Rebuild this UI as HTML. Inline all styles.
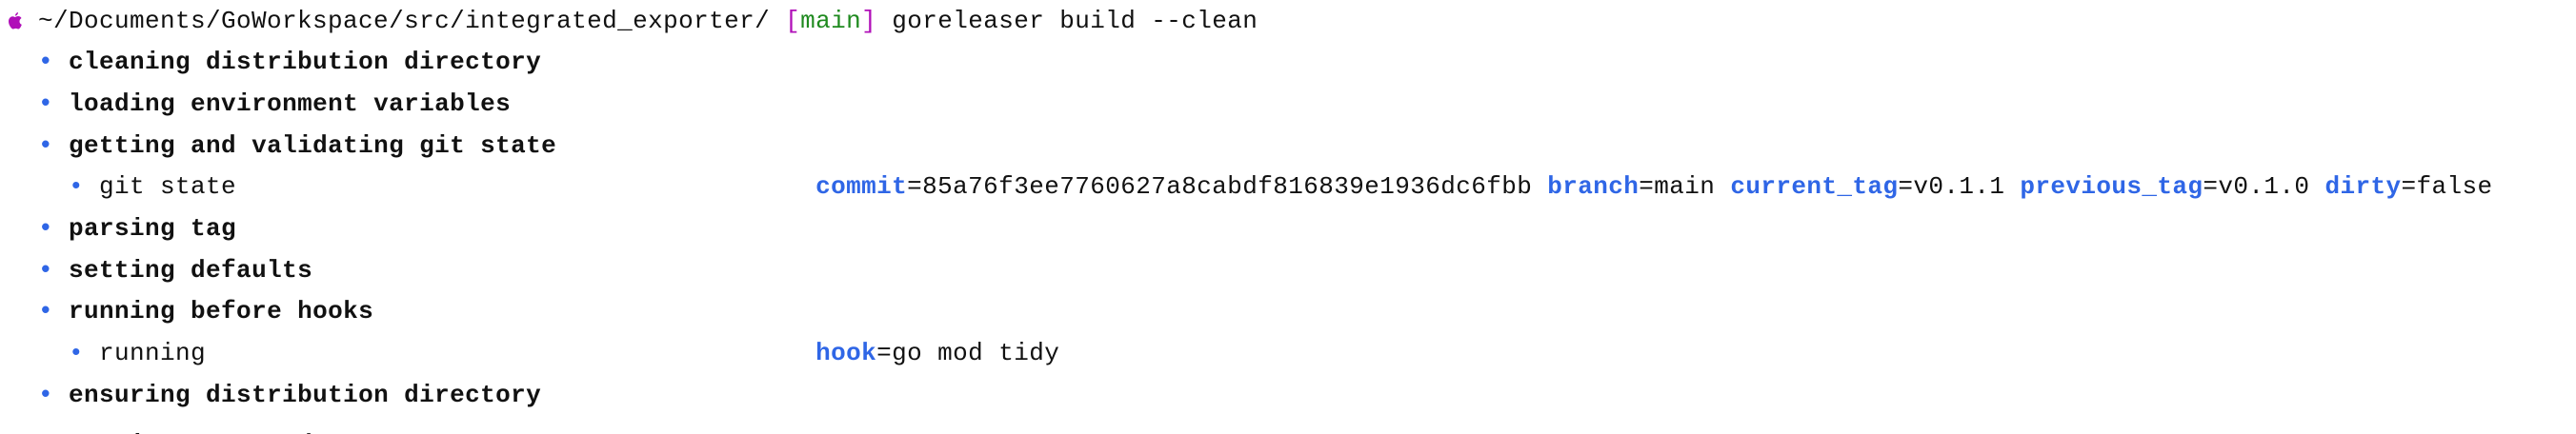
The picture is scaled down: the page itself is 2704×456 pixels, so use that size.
<!DOCTYPE html>
<html><head><meta charset="utf-8"><style>
html,body{margin:0;padding:0;background:#fff;width:2704px;height:456px;overflow:hidden;position:relative}
.t{position:absolute;left:8px;white-space:pre;font-family:"Liberation Mono",monospace;font-size:26px;line-height:43.7px;height:43.7px;color:#111;letter-spacing:0.4px}
.b{font-weight:bold}
.k{color:#2f66e6;font-weight:bold}
.bl{color:#2f66e6}
.m{color:#b00fb8}
.g{color:#1f8a1f}
.clip{position:absolute;left:0;top:446px;width:2704px;height:10px;overflow:hidden}
</style></head><body>
<svg style="position:absolute;left:8px;top:12px" width="16" height="20" viewBox="0 0 16 20"><path d="M11 1c0 2-1.5 3.5-3 3.6C8 2.8 9.4 1.2 11 1z M8 6c1-.6 2-1 3-1 1.6 0 2.8.8 3.5 2-1.6 1-2 2.4-2 3.6 0 1.6 1 2.8 2.3 3.3-.6 1.9-2 4.6-3.6 4.6-1 0-1.4-.6-2.6-.6-1.3 0-1.8.6-2.8.6C4.2 18.5 1 14.5 1 10.5 1 7.4 3 5.2 5.3 5.2c1.2 0 2 .8 2.7.8z" fill="#b00fb8"/></svg>
<div class="t" style="top:0.5px">  ~/Documents/GoWorkspace/src/integrated_exporter/ <span class="m">[</span><span class="g">main</span><span class="m">]</span> goreleaser build --clean</div>
<div class="t b" style="top:44.2px">  <span class="bl">•</span> cleaning distribution directory</div>
<div class="t b" style="top:87.9px">  <span class="bl">•</span> loading environment variables</div>
<div class="t b" style="top:131.6px">  <span class="bl">•</span> getting and validating git state</div>
<div class="t" style="top:175.3px">    <span class="bl">•</span> git state                                      <span class="k">commit</span>=85a76f3ee7760627a8cabdf816839e1936dc6fbb <span class="k">branch</span>=main <span class="k">current_tag</span>=v0.1.1 <span class="k">previous_tag</span>=v0.1.0 <span class="k">dirty</span>=false</div>
<div class="t b" style="top:219px">  <span class="bl">•</span> parsing tag</div>
<div class="t b" style="top:262.7px">  <span class="bl">•</span> setting defaults</div>
<div class="t b" style="top:306.4px">  <span class="bl">•</span> running before hooks</div>
<div class="t" style="top:350.1px">    <span class="bl">•</span> running                                        <span class="k">hook</span>=go mod tidy</div>
<div class="t b" style="top:393.8px">  <span class="bl">•</span> ensuring distribution directory</div>
<div class="clip"><div class="t b" style="top:0">  <span class="bl">•</span> setting up metadata</div></div>
</body></html>
